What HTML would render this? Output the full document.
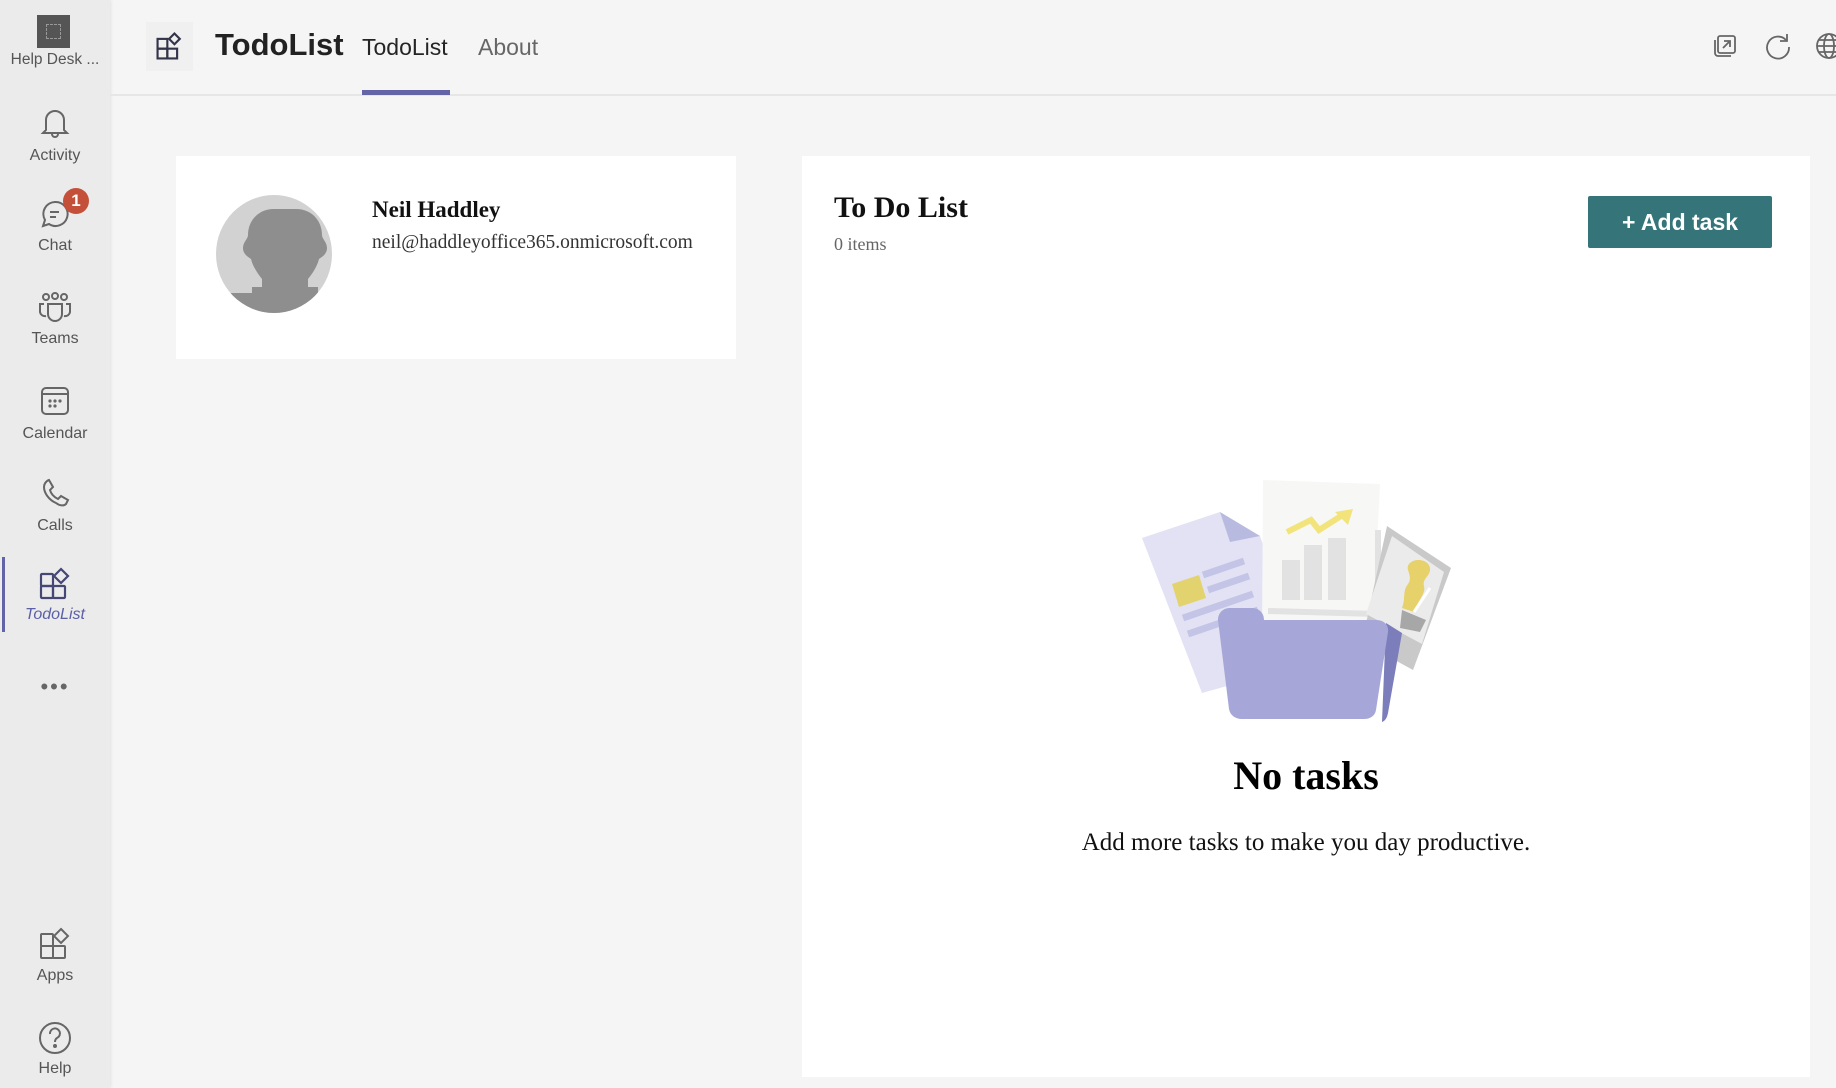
<!DOCTYPE html>
<html><head><meta charset="utf-8"><style>
*{margin:0;padding:0;box-sizing:border-box}
body{width:1836px;height:1088px;overflow:hidden;background:#f5f5f5;font-family:"Liberation Sans",sans-serif;position:relative}
.side{position:absolute;left:0;top:0;width:110px;height:1088px;background:#ebebeb;box-shadow:1px 0 3px rgba(0,0,0,.08)}
.it{position:absolute;left:0;width:110px;text-align:center;font-size:16px;color:#555}
.it svg{display:block;margin:0 auto}
.abs{position:absolute}
.serif{font-family:"Liberation Serif",serif}
</style></head><body>
<div class="side">
  <div class="abs" style="left:37px;top:15px;width:33px;height:33px;background:#555"><div style="margin:9px;width:15px;height:15px;border:1px dashed #999"></div></div>
  <div class="it" style="top:51px;font-size:15.5px">Help Desk ...</div>
  <div class="it" style="top:106px"><svg width="34" height="34" viewBox="0 0 34 34" fill="none" stroke="#666" stroke-width="2"><path d="M8 24V14a9 9 0 0 1 18 0v10l3 3H5z"/><path d="M14 28a3 3 0 0 0 6 0"/></svg><div style="margin-top:7px">Activity</div></div>
  <div class="it" style="top:198px"><svg width="34" height="34" viewBox="0 0 34 34" fill="none" stroke="#666" stroke-width="2"><path d="M17 4a12 12 0 1 1-6 22l-6 2 2-6A12 12 0 0 1 17 4z"/><path d="M12 14h9M12 19h6"/></svg><div style="margin-top:5px">Chat</div></div>
  <div class="abs" style="left:63px;top:188px;width:26px;height:26px;border-radius:50%;background:#c4503a;color:#fff;font-weight:bold;font-size:17px;text-align:center;line-height:26px">1</div>
  <div class="it" style="top:290px"><svg width="36" height="36" viewBox="0 0 36 36" fill="none" stroke="#666" stroke-width="2"><circle cx="9" cy="7" r="3"/><circle cx="18" cy="6" r="3"/><circle cx="27" cy="7" r="3"/><path d="M11 14h14v10a7 7 0 0 1-14 0z"/><path d="M7 14H3v8a5 5 0 0 0 6 4M29 14h4v8a5 5 0 0 1-6 4"/></svg><div style="margin-top:4px">Teams</div></div>
  <div class="it" style="top:384px"><svg width="34" height="34" viewBox="0 0 34 34" fill="none" stroke="#666" stroke-width="2"><rect x="4" y="4" width="26" height="26" rx="4"/><path d="M4 10h26"/><g fill="#666" stroke="none"><circle cx="12" cy="17" r="1.6"/><circle cx="17" cy="17" r="1.6"/><circle cx="22" cy="17" r="1.6"/><circle cx="12" cy="22" r="1.6"/><circle cx="17" cy="22" r="1.6"/></g></svg><div style="margin-top:7px">Calendar</div></div>
  <div class="it" style="top:476px"><svg width="34" height="34" viewBox="0 0 34 34" fill="none" stroke="#666" stroke-width="2"><path d="M11 4l4 7-3 3c1 4 4 7 8 9l3-3 7 4-2 4c-2 2-6 2-10-1C11 24 6 17 6 11c0-3 2-6 5-7z"/></svg><div style="margin-top:7px">Calls</div></div>
  <div class="abs" style="left:2px;top:557px;width:3px;height:75px;background:#6264a7"></div>
  <div class="it" style="top:566px;color:#5b5fa6;font-style:italic"><svg width="36" height="36" viewBox="0 0 36 36" fill="none" stroke="#464775" stroke-width="2.2"><rect x="4" y="8" width="12" height="12" rx="1"/><rect x="4" y="20" width="12" height="12" rx="1"/><rect x="16" y="20" width="12" height="12" rx="1"/><path d="M24 3l7 7-7 7-7-7z"/></svg><div style="margin-top:4px">TodoList</div></div>
  <div class="it" style="top:674px;font-size:22px;color:#666;letter-spacing:2px">•••</div>
  <div class="it" style="top:926px"><svg width="36" height="36" viewBox="0 0 36 36" fill="none" stroke="#666" stroke-width="2"><rect x="4" y="8" width="12" height="12" rx="1"/><rect x="4" y="20" width="12" height="12" rx="1"/><rect x="16" y="20" width="12" height="12" rx="1"/><path d="M24 3l7 7-7 7-7-7z"/></svg><div style="margin-top:5px">Apps</div></div>
  <div class="it" style="top:1020px"><svg width="36" height="36" viewBox="0 0 36 36" fill="none" stroke="#666" stroke-width="2"><circle cx="18" cy="18" r="15"/><path d="M13 14a5 5 0 1 1 7 4c-1.5 1-2 2-2 4"/><circle cx="18" cy="26" r="1" fill="#666"/></svg><div style="margin-top:4px">Help</div></div>
</div>

<div class="abs" style="left:110px;top:94px;width:1726px;height:2px;background:#e6e6e6"></div>
<div class="abs" style="left:146px;top:22px;width:47px;height:49px;background:#f0f0f0"></div>
<svg class="abs" style="left:154px;top:30px" width="32" height="32" viewBox="0 0 36 36" fill="none" stroke="#33344a" stroke-width="2.4"><rect x="4" y="10" width="11" height="11"/><rect x="4" y="21" width="11" height="11"/><rect x="15" y="21" width="11" height="11"/><path d="M23 4l6 6-6 6-6-6z"/></svg>
<div class="abs" style="left:215px;top:27px;font-size:31px;font-weight:bold;color:#222">TodoList</div>
<div class="abs" style="left:362px;top:34px;font-size:23px;color:#252525">TodoList</div>
<div class="abs" style="left:362px;top:90px;width:88px;height:5px;background:#6264a7"></div>
<div class="abs" style="left:478px;top:34px;font-size:23px;color:#666">About</div>
<svg class="abs" style="left:1712px;top:33px" width="26" height="26" viewBox="0 0 26 26" fill="none" stroke="#666" stroke-width="1.8"><rect x="6" y="3" width="17" height="17" rx="2"/><path d="M3 7v13a3 3 0 0 0 3 3h13"/><path d="M11 15l7-7M12 8h6v6"/></svg>
<svg class="abs" style="left:1764px;top:32px" width="28" height="28" viewBox="0 0 28 28" fill="none" stroke="#666" stroke-width="1.8"><path d="M22 8a11 11 0 1 0 3 7"/><path d="M23 2v7h-7"/></svg>
<svg class="abs" style="left:1815px;top:32px" width="28" height="28" viewBox="0 0 28 28" fill="none" stroke="#666" stroke-width="1.8"><circle cx="14" cy="14" r="12"/><ellipse cx="14" cy="14" rx="5" ry="12"/><path d="M2 14h24M4 8h20M4 20h20"/></svg>

<div class="abs" style="left:176px;top:156px;width:560px;height:203px;background:#fff"></div>
<svg class="abs" style="left:215px;top:195px" width="118" height="118" viewBox="0 0 118 118"><defs><clipPath id="c"><ellipse cx="59" cy="59" rx="58" ry="59"/></clipPath></defs><g clip-path="url(#c)"><rect width="118" height="118" fill="#d2d2d2"/><path d="M59 14c-16 0-26 12-26 26 0 4-5 7-5 13s5 9 8 11c2 8 7 15 11 20v8h-10v6h-37v40h140v-40h-37v-6h-10v-8c4-5 9-12 11-20 3-2 8-5 8-11s-5-9-5-13c0-14-10-26-26-26z" fill="#8e8e8e"/></g></svg>
<div class="abs serif" style="left:372px;top:197px;font-size:23px;font-weight:bold;color:#111">Neil Haddley</div>
<div class="abs serif" style="left:372px;top:232px;font-size:19.5px;color:#333">neil@haddleyoffice365.onmicrosoft.com</div>

<div class="abs" style="left:802px;top:156px;width:1008px;height:921px;background:#fff"></div>
<div class="abs serif" style="left:834px;top:191px;font-size:30px;font-weight:bold;color:#111">To Do List</div>
<div class="abs serif" style="left:834px;top:234px;font-size:18px;color:#666">0 items</div>
<div class="abs" style="left:1588px;top:196px;width:184px;height:52px;background:#357478;border-radius:2px;color:#fff;font-size:23px;font-weight:bold;text-align:center;line-height:52px">+ Add task</div>

<svg class="abs" style="left:1140px;top:478px" width="335" height="245" viewBox="0 0 335 245">
<path d="M2 60L80 34 120 58 165 186 62 215z" fill="#e2e2f4"/><path d="M80 34l10 30 30-6z" fill="#b9badf"/>
<path d="M32 106l27-9 7 23-27 9z" fill="#e3d36f"/>
<g stroke="#c3c4e6" stroke-width="7"><path d="M63 97l41-14M68 112l41-14M43 140l70-24M48 156l70-24"/></g>
<path d="M123 2l117 4-8 155H122z" fill="#f7f7f6"/>
<path d="M128 133l110 3V52" stroke="#e2e2e2" stroke-width="6" fill="none"/>
<rect x="142" y="82" width="18" height="40" fill="#e2e2e2"/><rect x="164" y="67" width="18" height="55" fill="#e2e2e2"/><rect x="188" y="60" width="18" height="62" fill="#e2e2e2"/>
<path d="M147 54l24-12 8 10 22-14" stroke="#f2e47a" stroke-width="6" fill="none"/><path d="M195 34l18-3-5 16z" fill="#f2e47a"/>
<path d="M247 48l64 42-38 102-51-28z" fill="#c9c9c9"/><path d="M252 58l52 36-22 72-56-30z" fill="#ebebeb"/>
<path d="M268 92c-3-12 20-14 22-2 1 8-8 10-6 18 2 8-6 14-10 26l-12-4c4-10 0-16 6-24 3-4 2-8 0-14z" fill="#e6d16a"/>
<path d="M274 134l16-24" stroke="#fff" stroke-width="3"/>
<path d="M262 132l24 10-6 12-20-4z" fill="#a7a7a7"/>
<path d="M246 145l16 10-14 80c-1 5-3 8-6 9z" fill="#7c7dbb"/>
<path d="M78 142c0-7 5-12 12-12h22c7 0 12 5 12 12h112c8 0 13 5 12 12l-12 78c-1 6-6 9-12 9H102c-7 0-12-4-13-10z" fill="#a6a7d8"/>
</svg>
<div class="abs serif" style="left:802px;top:752px;width:1008px;text-align:center;font-size:40px;font-weight:bold;color:#000">No tasks</div>
<div class="abs serif" style="left:802px;top:829px;width:1008px;text-align:center;font-size:25px;color:#111">Add more tasks to make you day productive.</div>
</body></html>
